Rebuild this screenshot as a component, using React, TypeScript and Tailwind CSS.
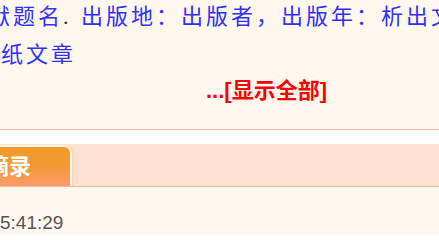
import React from 'react';

const serifCjk = { fontFamily: '"Liberation Serif", "Noto Sans CJK SC", serif' };

const App: React.FC = () => {
  return (
    <div className="w-[439px] h-[234px] overflow-hidden bg-[#fff8ee] font-['Liberation_Sans','Noto_Sans_CJK_SC',sans-serif]">
      {/* 参考文献格式 */}
      <div
        className="text-[22px] leading-[38px] tracking-[3px] text-[#3030ff] whitespace-nowrap -mt-[2px]"
        style={serifCjk}
      >
        <div className="-ml-[12px]">
          献题名<span className="text-[#333] tracking-normal mr-[7px]">. </span>出版地：出版者，出版年：析出文献
        </div>
        <div className="ml-[1px]">纸文章</div>
      </div>

      <div className="pl-[206px] h-[55px] pt-[4px]">
        <a className="text-[22px] leading-[26px] font-bold text-[#ff0000]">...[显示全部]</a>
      </div>

      <div className="border-t border-[#fbb99b] h-[15px] bg-white" />

      {/* 标签栏 */}
      <div className="h-[43px] bg-[#ffe1d2] border-b border-[#fbb99b] flex items-end">
        <div className="-ml-[20px] w-[92px] h-[41px] rounded-tr-[8px] border-t-2 border-r-2 border-[#fff3e6] bg-gradient-to-b from-[#f19c2a] via-[#f29a36] to-[#ff9b6c] shadow-[2px_0_0_#fcd3bd] flex items-center pl-[7px]">
          <span className="text-[22px] font-bold text-white leading-none">摘录</span>
        </div>
      </div>

      <div className="pt-[25px] text-[19px] leading-[22px] text-[#555]">5:41:29</div>
    </div>
  );
};

export default App;
